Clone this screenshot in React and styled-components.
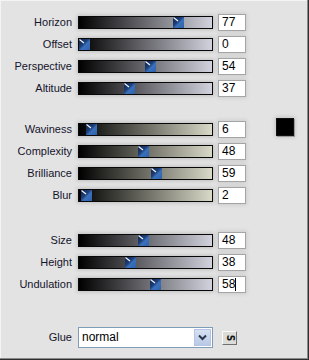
import React from 'react'
import styled, { createGlobalStyle } from 'styled-components'

const Global = createGlobalStyle`
  html, body {
    margin: 0;
    padding: 0;
    background: #e3e3e3;
  }
`

const Panel = styled.div`
  width: 309px;
  height: 360px;
  box-sizing: border-box;
  background: #e3e3e3;
  border-right: 1px solid #303030;
  border-bottom: 1px solid #303030;
  box-shadow: inset -1px -1px 0 #8a8a8a, inset 1px 1px 0 #f4f4f4;
  padding-top: 11px;
  font-family: "Liberation Sans", Arial, sans-serif;
  display: flex;
  flex-direction: column;
`

const Group = styled.div`
  display: flex;
  flex-direction: column;
  margin-top: ${props => props.gap || 0}px;
`

const Row = styled.div`
  display: flex;
  align-items: center;
  height: 22px;
`

const Label = styled.div`
  width: 72px;
  text-align: right;
  font-size: 11px;
  color: #14142c;
  margin-right: 6px;
`

const Track = styled.div`
  position: relative;
  width: 135px;
  height: 13px;
  box-sizing: border-box;
  border: 1px solid #080808;
  background: linear-gradient(to right, #000 0%, ${props => props.end} 100%);
  box-shadow: 0 0 4px 1px rgba(0, 0, 0, 0.16);
`

const Thumb = styled.div`
  position: absolute;
  top: 0;
  width: 11px;
  height: 11px;
  background: linear-gradient(135deg, #0e2248 0%, #1d3f78 42%, #3a70bc 58%, #2f62aa 100%);
`

const ThumbLine = styled.svg`
  position: absolute;
  top: 0;
  left: 0;
`

const NumBox = styled.div`
  width: 28px;
  height: 17px;
  box-sizing: border-box;
  margin-left: 5px;
  border: 1px solid #a4a4a4;
  background: #fff;
  font-size: 12px;
  line-height: 15px;
  color: #000;
  padding-left: 3px;
  display: flex;
  align-items: center;
  box-shadow: 0 0 4px 1px rgba(0, 0, 0, 0.1);
`

const Caret = styled.span`
  display: inline-block;
  width: 1px;
  height: 13px;
  background: #000;
`

const Swatch = styled.div`
  width: 18px;
  height: 18px;
  margin-left: 30px;
  margin-top: -5px;
  box-sizing: border-box;
  background: #000;
  border: 1px solid #111;
  box-shadow: 1px 1px 0 #9a9a9a, 0 0 4px 1px rgba(0, 0, 0, 0.15);
`

const GlueRow = styled(Row)`
  height: 22px;
  margin-top: 31px;
`

const Select = styled.div`
  width: 135px;
  height: 21px;
  box-sizing: border-box;
  border: 1px solid #7f9db9;
  background: #fff;
  display: flex;
  align-items: stretch;
`

const SelectText = styled.div`
  flex: 1;
  font-size: 12px;
  color: #000;
  padding-left: 3px;
  display: flex;
  align-items: center;
`

const DropButton = styled.div`
  width: 17px;
  margin: 1px;
  background: linear-gradient(#d6e0f2, #b9c9e6);
  border: 1px solid #b3c4e4;
  box-sizing: border-box;
  display: flex;
  align-items: center;
  justify-content: center;
`

const SmallButton = styled.div`
  width: 15px;
  height: 14px;
  margin-left: 9px;
  margin-top: 2px;
  box-sizing: border-box;
  background: #dcdcd8;
  border: 1px solid;
  border-color: #fafafa #707070 #707070 #fafafa;
  display: flex;
  align-items: center;
  justify-content: center;
  font-family: "DejaVu Sans", sans-serif;
  font-weight: bold;
  font-size: 10px;
  line-height: 10px;
  color: #111;
`

const Glyph = styled.span`
  display: inline-block;
  transform: rotate(90deg) scaleX(0.9);
`

const COOL = '#d2d2de'
const WARM = '#d9d9c8'

const groups = [
  {
    gap: 0,
    end: COOL,
    rows: [
      ['Horizon', 77],
      ['Offset', 0],
      ['Perspective', 54],
      ['Altitude', 37],
    ],
  },
  {
    gap: 19,
    end: WARM,
    rows: [
      ['Waviness', 6],
      ['Complexity', 48],
      ['Brilliance', 59],
      ['Blur', 2],
    ],
  },
  {
    gap: 23,
    end: COOL,
    rows: [
      ['Size', 48],
      ['Height', 38],
      ['Undulation', 58, true],
    ],
  },
]

const Slider = ({ value, end }) => (
  <Track end={end}>
    <Thumb style={{ left: Math.round(value * 1.22) }}>
      <ThumbLine width="11" height="11">
        <line x1="0.5" y1="0.5" x2="5" y2="4" stroke="#f2f5fc" strokeWidth="1.2" />
      </ThumbLine>
    </Thumb>
  </Track>
)

const App = () => {
  return (
    <Panel>
      <Global />
      {groups.map((group, gi) => (
        <Group key={gi} gap={group.gap}>
          {group.rows.map(([name, value, caret], ri) => (
            <Row key={name}>
              <Label>{name}</Label>
              <Slider value={value} end={group.end} />
              <NumBox>
                {value}
                {caret && <Caret />}
              </NumBox>
              {gi === 1 && ri === 0 && <Swatch />}
            </Row>
          ))}
        </Group>
      ))}
      <GlueRow>
        <Label>Glue</Label>
        <Select>
          <SelectText>normal</SelectText>
          <DropButton>
            <svg width="9" height="7" viewBox="0 0 9 7">
              <path d="M1 1.5 L4.5 5 L8 1.5" fill="none" stroke="#27354f" strokeWidth="2" />
            </svg>
          </DropButton>
        </Select>
        <SmallButton>
          <Glyph>S</Glyph>
        </SmallButton>
      </GlueRow>
    </Panel>
  )
}

export default App
